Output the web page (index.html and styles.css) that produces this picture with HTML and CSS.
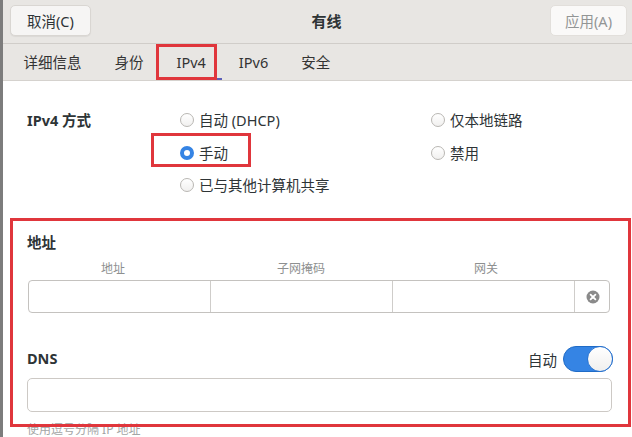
FILE: index.html
```html
<!DOCTYPE html>
<html lang="zh-CN">
<head>
    <meta charset="UTF-8">
    <title>有线</title>
    <link rel="stylesheet" href="styles.css">
</head>
<body>
    <div class="window">
        <div class="header">
            <button class="btn">取消(C)</button>
            <div class="title">有线</div>
            <button class="btn btn-disabled">应用(A)</button>
        </div>

        <div class="tabs">
            <div class="tab">详细信息</div>
            <div class="tab">身份</div>
            <div class="tab active">IPv4</div>
            <div class="tab">IPv6</div>
            <div class="tab">安全</div>
        </div>

        <div class="content">
            <div class="method">
                <div class="label">IPv4 方式</div>
                <div class="radios">
                    <div class="radio"><span class="dot"></span>自动 (DHCP)</div>
                    <div class="radio"><span class="dot"></span>仅本地链路</div>
                    <div class="radio"><span class="dot checked"></span>手动</div>
                    <div class="radio"><span class="dot"></span>禁用</div>
                    <div class="radio"><span class="dot"></span>已与其他计算机共享</div>
                </div>
            </div>

            <div class="section-title">地址</div>
            <div class="addr-head">
                <div>地址</div>
                <div>子网掩码</div>
                <div>网关</div>
                <div></div>
            </div>
            <div class="addr-row">
                <div class="cell"></div>
                <div class="cell"></div>
                <div class="cell"></div>
                <div class="cell clear">
                    <svg width="14" height="14" viewBox="0 0 14 14">
                        <circle cx="7" cy="7" r="6.5" fill="#8a8a8a"/>
                        <path d="M4.6 4.6 L9.4 9.4 M9.4 4.6 L4.6 9.4" stroke="#fff" stroke-width="1.8" stroke-linecap="round"/>
                    </svg>
                </div>
            </div>

            <div class="dns-head">
                <div class="section-title">DNS</div>
                <div class="auto">自动 <span class="switch"><span class="knob"></span></span></div>
            </div>
            <div class="input"></div>
            <div class="hint">使用逗号分隔 IP 地址</div>
        </div>

        <!-- annotation boxes -->
        <div class="mark mark-tab"></div>
        <div class="mark mark-manual"></div>
        <div class="mark mark-addr"></div>
    </div>
</body>
</html>
```

FILE: styles.css
```css
body {
    margin: 0;
    font-family: "Noto Sans", "Noto Sans CJK SC", sans-serif;
    color: #2e3436;
    background: #fff;
}
.window {
    position: relative;
    width: 629px;
    height: 437px;
    overflow: hidden;
    border-left: 3px solid #7c7c7c;
    background: #fff;
}
.header {
    height: 43px;
    display: flex;
    align-items: center;
    justify-content: space-between;
    padding: 0 5px 0 7px;
    background: #e8e6e3;
    border-bottom: 1px solid #d0cdc9;
}
.btn {
    height: 31px;
    padding: 0 16px;
    margin-top: -3px;
    border: 1px solid #d9d6d2;
    border-radius: 5px;
    background: #f6f5f4;
    box-shadow: 0 1px 1px rgba(0,0,0,0.06);
    font-family: inherit;
    font-size: 14.5px;
    color: #2e3436;
}
.btn-disabled {
    padding: 0 14px;
    background: #faf9f8;
    color: #929595;
    border-color: #e2dfdb;
    box-shadow: none;
}
.title {
    font-weight: bold;
    font-size: 15px;
    margin-left: 12px;
    margin-top: -3px;
}
.tabs {
    height: 36px;
    display: flex;
    padding-left: 4px;
    background: #e8e6e3;
    border-bottom: 1px solid #d5d2ce;
}
.tab {
    padding: 0 16.5px;
    font-size: 14.5px;
    line-height: 36px;
    color: #333;
}
.tab.active {
    box-shadow: inset 0 -2px 0 #5c5fb8;
}
.content {
    padding: 0 19px 0 24px;
}
.method {
    display: flex;
    padding-top: 28px;
}
.label, .section-title {
    font-weight: bold;
    font-size: 14.5px;
    color: #2e3436;
}
.label {
    width: 153px;
    line-height: 22px;
}
.radios {
    display: grid;
    grid-template-columns: 251px 1fr;
    row-gap: 10.5px;
}
.radio {
    display: flex;
    align-items: center;
    gap: 5px;
    font-size: 14.5px;
    line-height: 22px;
    color: #2e3436;
}
.dot {
    width: 14px;
    height: 14px;
    border: 1px solid #b9b7b3;
    border-radius: 50%;
    background: linear-gradient(#fff, #f1f0ef);
    box-sizing: border-box;
}
.dot.checked {
    border: 4px solid #3584e4;
    background: #fff;
}
.section-title {
    margin-top: 35px;
    line-height: 22px;
}
.addr-head {
    display: grid;
    grid-template-columns: 182px 182px 182px 35px;
    margin: 7px 0 0 1px;
    font-size: 12px;
    line-height: 18px;
    color: #8e9090;
    text-align: center;
}
.addr-head div:first-child {
    padding-right: 12px;
}
.addr-head div:nth-child(3) {
    padding-left: 6px;
}
.addr-row {
    display: grid;
    grid-template-columns: 182px 182px 182px 35px;
    height: 33px;
    margin: 2px 0 0 1px;
    border: 1px solid #c4c2bf;
    border-radius: 4px;
    box-sizing: border-box;
    width: 582px;
}
.cell {
    border-right: 1px solid #cfcdca;
}
.cell.clear {
    border-right: none;
    display: flex;
    align-items: center;
    justify-content: center;
}
.dns-head {
    display: flex;
    justify-content: space-between;
    align-items: flex-end;
    margin-top: 33px;
}
.dns-head .section-title {
    margin-top: 0;
}
.auto {
    display: flex;
    align-items: center;
    gap: 6px;
    font-size: 14.5px;
    color: #2e3436;
    margin-bottom: -3px;
}
.switch {
    position: relative;
    width: 50px;
    height: 26px;
    border-radius: 13px;
    background: #3584e4;
    border: 1px solid #1f6bc6;
    box-sizing: border-box;
}
.knob {
    position: absolute;
    right: -1px;
    top: -1px;
    width: 26px;
    height: 26px;
    border-radius: 50%;
    background: linear-gradient(#fff, #f0efee);
    border: 1px solid #2b74d0;
    box-sizing: border-box;
}
.input {
    height: 34px;
    margin-top: 9px;
    border: 1px solid #cdc9c5;
    border-radius: 5px;
    box-sizing: border-box;
    width: 585px;
}
.hint {
    margin-top: 9px;
    font-size: 12px;
    line-height: 18px;
    color: #a3a5a5;
}
.mark {
    position: absolute;
    border: 3px solid #e0363c;
    box-sizing: border-box;
}
.mark-tab {
    left: 153px;
    top: 44px;
    width: 61px;
    height: 36px;
}
.mark-manual {
    left: 148px;
    top: 133px;
    width: 100px;
    height: 34px;
}
.mark-addr {
    left: 7px;
    top: 218px;
    width: 621px;
    height: 209px;
}
```
